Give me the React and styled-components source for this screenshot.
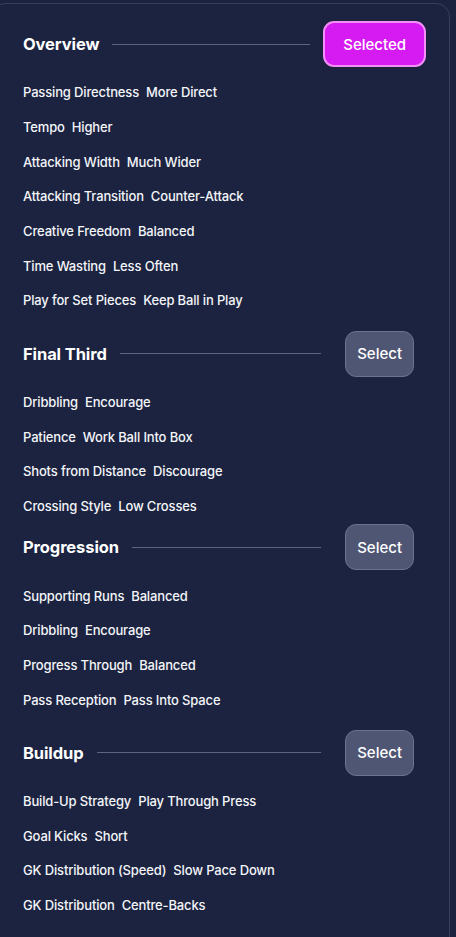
import React from "react";
import styled, { createGlobalStyle } from "styled-components";

const GlobalStyle = createGlobalStyle`
  html, body {
    margin: 0;
    padding: 0;
    background: #1b2340;
    font-family: Inter, "Noto Sans", sans-serif;
    color: #f2f3f7;
    overflow: hidden;
  }
`;

const Page = styled.div`
  padding-top: 3px;
  height: 937px;
  box-sizing: border-box;
`;

const Card = styled.div`
  margin-left: -8px;
  width: 458px;
  height: 960px;
  box-sizing: border-box;
  border: 1px solid #383f5c;
  border-radius: 14px;
  padding: 17px 0 0 30px;
`;

const Section = styled.section`
  margin-top: ${(p) => p.$top || 0}px;
`;

const Header = styled.div`
  display: flex;
  align-items: center;
  height: 46px;
  margin-bottom: 8px;
  padding-right: ${(p) => p.$right}px;
`;

const Title = styled.h2`
  margin: 0;
  font-size: 16.5px;
  font-weight: 700;
  color: #ffffff;
  letter-spacing: -0.1px;
`;

const Rule = styled.div`
  flex: 1;
  height: 1px;
  background: #5d6582;
  margin: 0 ${(p) => p.$gap}px 0 13px;
`;

const Button = styled.button`
  height: 46px;
  box-sizing: border-box;
  border-radius: 11px;
  font-family: inherit;
  font-size: 15px;
  font-weight: 500;
  color: #ffffff;
  cursor: pointer;
  padding: 0 ${(p) => (p.$selected ? 18 : 11)}px;
  background: ${(p) => (p.$selected ? "#d61bf2" : "#4f5673")};
  border: ${(p) => (p.$selected ? "2px solid #f38ef7" : "1px solid #6c7391")};
`;

const Item = styled.div`
  display: flex;
  align-items: center;
  gap: 7px;
  height: 34.67px;
  font-size: 13px;
  font-weight: 500;
  color: #f4f5f9;
  letter-spacing: -0.15px;
`;

const sections = [
  {
    title: "Overview",
    selected: true,
    top: 0,
    items: [
      ["Passing Directness", "More Direct"],
      ["Tempo", "Higher"],
      ["Attacking Width", "Much Wider"],
      ["Attacking Transition", "Counter-Attack"],
      ["Creative Freedom", "Balanced"],
      ["Time Wasting", "Less Often"],
      ["Play for Set Pieces", "Keep Ball in Play"],
    ],
  },
  {
    title: "Final Third",
    top: 13,
    items: [
      ["Dribbling", "Encourage"],
      ["Patience", "Work Ball Into Box"],
      ["Shots from Distance", "Discourage"],
      ["Crossing Style", "Low Crosses"],
    ],
  },
  {
    title: "Progression",
    top: 1,
    items: [
      ["Supporting Runs", "Balanced"],
      ["Dribbling", "Encourage"],
      ["Progress Through", "Balanced"],
      ["Pass Reception", "Pass Into Space"],
    ],
  },
  {
    title: "Buildup",
    top: 13,
    items: [
      ["Build-Up Strategy", "Play Through Press"],
      ["Goal Kicks", "Short"],
      ["GK Distribution (Speed)", "Slow Pace Down"],
      ["GK Distribution", "Centre-Backs"],
    ],
  },
];

export default function App() {
  return (
    <Page>
      <GlobalStyle />
      <Card>
        {sections.map((s) => (
          <Section key={s.title} $top={s.top}>
            <Header $right={s.selected ? 23 : 35}>
              <Title>{s.title}</Title>
              <Rule $gap={s.selected ? 13 : 24} />
              <Button $selected={s.selected}>
                {s.selected ? "Selected" : "Select"}
              </Button>
            </Header>
            {s.items.map(([label, value], i) => (
              <Item key={i}>
                <span>{label}</span>
                <span>{value}</span>
              </Item>
            ))}
          </Section>
        ))}
      </Card>
    </Page>
  );
}
